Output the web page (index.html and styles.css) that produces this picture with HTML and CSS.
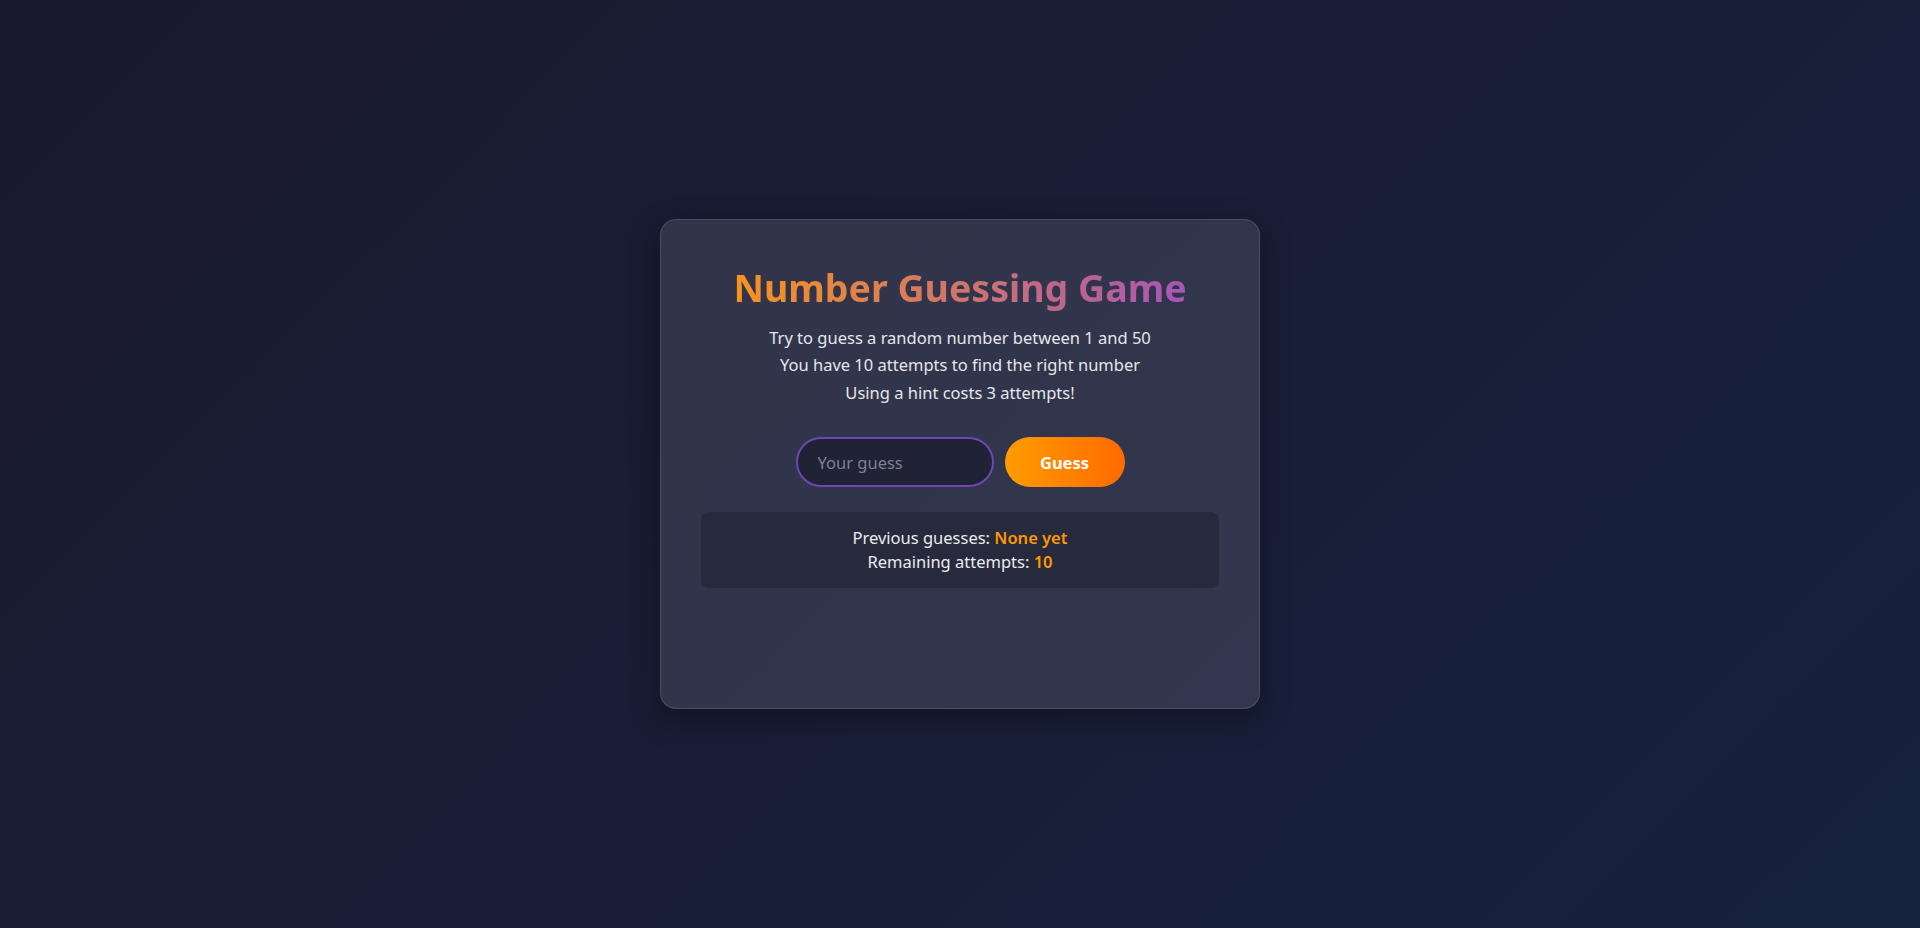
FILE: index.html
```html
<!DOCTYPE html>
<html lang="en">
<head>
<meta charset="utf-8">
<title>Number Guessing Game</title>
<link rel="stylesheet" href="styles.css">
</head>
<body>
  <main class="card">
    <h1 class="title"><span class="title-text">Number Guessing Game</span></h1>
    <p class="intro">Try to guess a random number between 1 and 50<br>You have 10 attempts to find the right number<br>Using a hint costs 3 attempts!</p>
    <div class="controls">
      <input class="guess-input" type="text" placeholder="Your guess">
      <button class="guess-btn" type="button">Guess</button>
    </div>
    <div class="stats">
      <div>Previous guesses: <span class="hl">None yet</span></div>
      <div>Remaining attempts: <span class="hl">10</span></div>
    </div>
    <div class="message"></div>
  </main>
</body>
</html>
```

FILE: styles.css
```css
* { box-sizing: border-box; }
html, body { margin: 0; height: 100%; }
body {
  font-family: "Noto Sans", "Open Sans", sans-serif;
  background: linear-gradient(135deg, #1a1a2e 0%, #16213e 100%);
  color: #e6e6e6;
  display: flex;
  align-items: center;
  justify-content: center;
  min-height: 100vh;
}
.card {
  width: 600px;
  padding: 41px 40px 40px;
  background: rgba(255, 255, 255, 0.11);
  border: 1px solid rgba(255, 255, 255, 0.12);
  border-radius: 16px;
  box-shadow: 0 10px 30px rgba(0, 0, 0, 0.35);
  text-align: center;
}
.title {
  margin: 0 0 8.5px;
  font-size: 37.5px;
  line-height: 54px;
  font-weight: 700;
}
.title-text {
  display: inline-block;
  background: linear-gradient(90deg, #f7941d 0%, #a855b8 100%);
  -webkit-background-clip: text;
  background-clip: text;
  color: transparent;
}
.intro {
  margin: 0 0 31px;
  font-size: 16.5px;
  line-height: 27.5px;
  color: #e6e6ea;
}
.controls {
  display: flex;
  justify-content: center;
  gap: 11px;
  margin-bottom: 25px;
}
.guess-input {
  width: 198px;
  height: 50px;
  border: 2px solid #6f46b4;
  border-radius: 25px;
  background: #202235;
  color: #e6e6e6;
  font-family: inherit;
  font-size: 16.5px;
  padding: 0 20px;
  outline: none;
}
.guess-input::placeholder { color: #7f8090; }
.guess-btn {
  width: 120px;
  height: 50px;
  border: none;
  border-radius: 25px;
  background: linear-gradient(90deg, #ff9c00 0%, #ff6a00 100%);
  color: #fff;
  font-family: inherit;
  font-size: 16.5px;
  font-weight: 700;
  cursor: pointer;
}
.stats {
  background: #272a3c;
  border-radius: 8px;
  padding: 14px 15px;
  font-size: 16.5px;
  line-height: 24px;
  color: #ececf0;
}
.hl { color: #ff9800; font-weight: 600; }
.message { height: 80px; }
```
